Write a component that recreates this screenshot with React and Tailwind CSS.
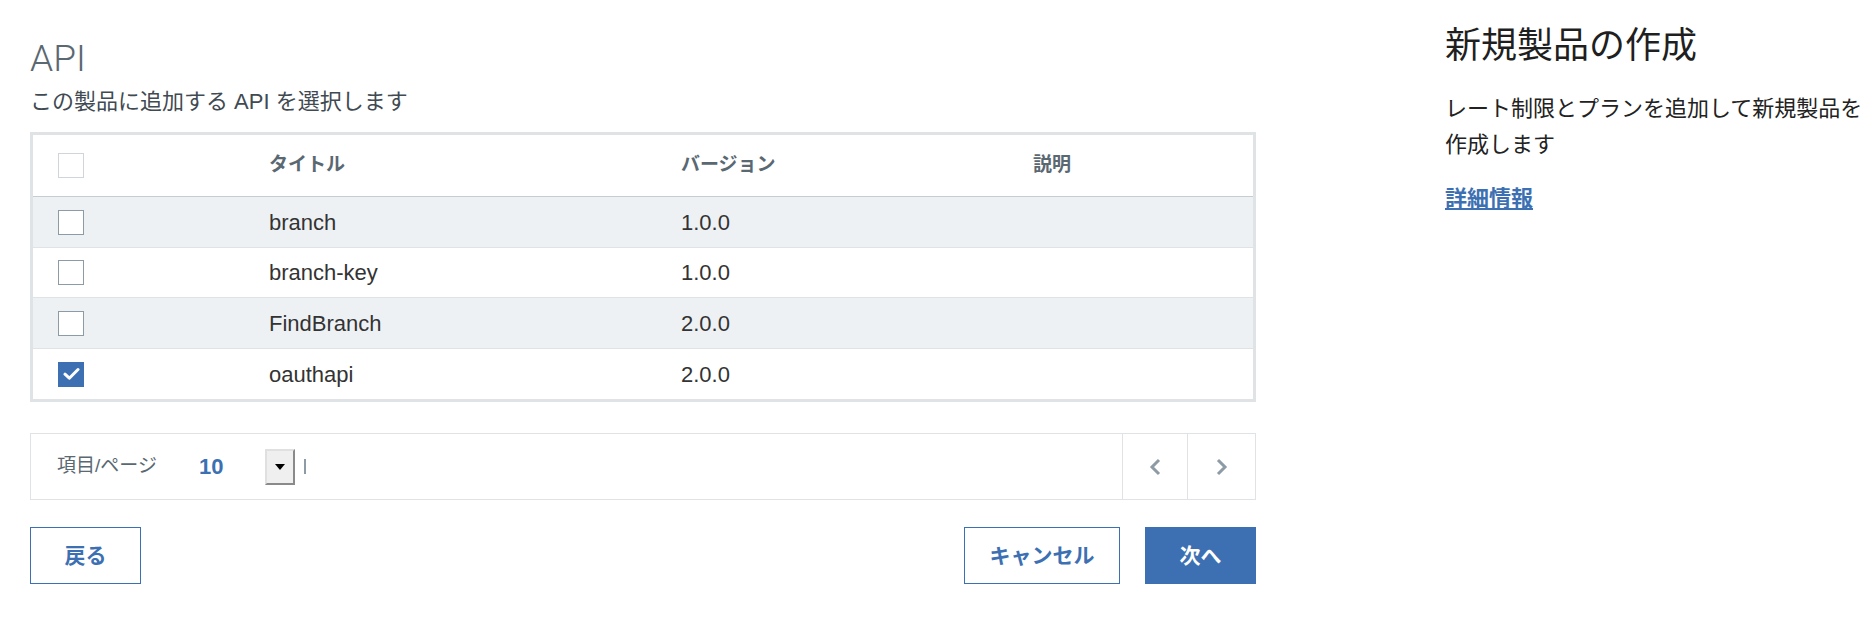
import React, { useState } from 'react';

const rows = [
  { title: 'branch', version: '1.0.0', desc: '', h: 'h-[51px]' },
  { title: 'branch-key', version: '1.0.0', desc: '', h: 'h-[50px]' },
  { title: 'FindBranch', version: '2.0.0', desc: '', h: 'h-[51px]' },
  { title: 'oauthapi', version: '2.0.0', desc: '', h: 'h-[50px]' },
];

const Check = ({ checked, light }) => (
  <div
    className={`w-[26px] h-[25px] flex items-center justify-center ${
      checked
        ? 'bg-[#3d70b2] border border-[#3d70b2]'
        : light
        ? 'bg-white border border-[#cfd5da]'
        : 'bg-white border border-[#8c9ba5]'
    }`}
  >
    {checked && (
      <svg width="17" height="14" viewBox="0 0 17 14" fill="none">
        <path d="M2 7.2 L6.3 11.2 L15 2.5" stroke="#fff" strokeWidth="3" strokeLinecap="round" strokeLinejoin="round" />
      </svg>
    )}
  </div>
);

const Chevron = ({ dir }) => (
  <svg width="14" height="18" viewBox="0 0 14 18" fill="none">
    {dir === 'left' ? (
      <path d="M11 2 L4 9 L11 16" stroke="#8c9ba5" strokeWidth="3" />
    ) : (
      <path d="M3 2 L10 9 L3 16" stroke="#8c9ba5" strokeWidth="3" />
    )}
  </svg>
);

const App = () => {
  const [selected] = useState([3]);

  return (
    <div className="flex min-h-[624px] bg-white font-['Liberation_Sans','Noto_Sans_CJK_JP',sans-serif]">
      {/* Left: API selection */}
      <div className="ml-[30px] w-[1226px] pt-[37px]">
        <h1 className="font-['Roboto',sans-serif] font-light text-[37px] leading-[44px] text-[#5a6872]">API</h1>
        <p className="mt-[6px] text-[22px] leading-[30px] text-[#3f4a52]">この製品に追加する API を選択します</p>

        {/* Table */}
        <div className="mt-[15px] border-[3px] border-[#dfe3e6]">
          <div className="grid grid-cols-[236px_412px_352px_1fr] h-[62px] items-center border-b border-[#c5ccd2] text-[19px] font-semibold text-[#5a6872]">
            <div className="pl-[25px]">
              <Check light />
            </div>
            <div>タイトル</div>
            <div>バージョン</div>
            <div>説明</div>
          </div>
          {rows.map((r, i) => (
            <div
              key={r.title}
              className={`grid grid-cols-[236px_412px_352px_1fr] ${r.h} items-center text-[22px] text-[#333] ${
                i < rows.length - 1 ? 'border-b border-[#dfe3e6]' : ''
              } ${i % 2 === 0 ? 'bg-[#eef1f4]' : 'bg-white'}`}
            >
              <div className="pl-[25px]">
                <Check checked={selected.includes(i)} />
              </div>
              <div>{r.title}</div>
              <div>{r.version}</div>
              <div>{r.desc}</div>
            </div>
          ))}
        </div>

        {/* Pagination */}
        <div className="mt-[31px] h-[67px] border border-[#dfe3e6] flex items-stretch">
          <div className="flex-1 flex items-center pl-[26px]">
            <span className="text-[19px] text-[#5a6872]">項目/ページ</span>
            <span className="ml-[42px] text-[22px] font-bold text-[#3d70b2]">10</span>
            <div className="ml-[42px] w-[30px] h-[36px] bg-[#efefef] border-2 border-t-[#e0e0e0] border-l-[#e0e0e0] border-r-[#8a8a8a] border-b-[#8a8a8a] flex items-center justify-center">
              <svg width="10" height="6" viewBox="0 0 10 6">
                <path d="M0 0 H10 L5 6 Z" fill="#000" />
              </svg>
            </div>
            <div className="ml-[9px] w-[2px] h-[15px] bg-[#8c9ba5]" />
          </div>
          <div className="w-[65px] border-l border-[#dfe3e6] flex items-center justify-center">
            <Chevron dir="left" />
          </div>
          <div className="w-[68px] border-l border-[#dfe3e6] flex items-center justify-center">
            <Chevron dir="right" />
          </div>
        </div>

        {/* Actions */}
        <div className="mt-[27px] flex items-center">
          <button className="w-[111px] h-[57px] border border-[#3d70b2] text-[21px] font-bold text-[#3d70b2]">戻る</button>
          <div className="flex-1" />
          <button className="w-[156px] h-[57px] border border-[#3d70b2] text-[21px] font-bold text-[#3d70b2]">キャンセル</button>
          <button className="ml-[25px] w-[111px] h-[57px] bg-[#3d70b2] text-[21px] font-bold text-white">次へ</button>
        </div>
      </div>

      {/* Right: help panel */}
      <div className="ml-[189px] w-[429px] pt-[18px] font-['Noto_Sans_CJK_JP',sans-serif]">
        <h2 className="text-[36px] leading-[48px] text-[#1f1f1f]">新規製品の作成</h2>
        <p className="mt-[22px] text-[22px] leading-[36px] text-[#222]">レート制限とプランを追加して新規製品を作成します</p>
        <a href="#" className="mt-[21px] block text-[22px] leading-[30px] font-bold text-[#3d70b2] underline">詳細情報</a>
      </div>
    </div>
  );
};

export default App;
